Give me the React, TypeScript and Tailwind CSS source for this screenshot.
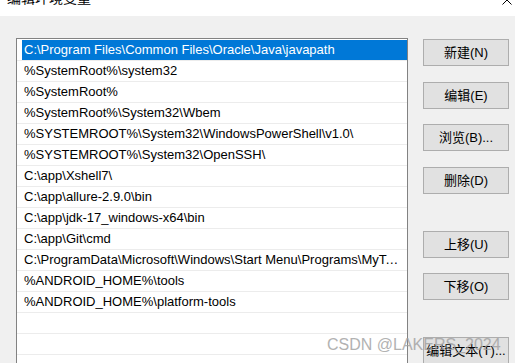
import React from "react";

const PATHS = [
  "C:\\Program Files\\Common Files\\Oracle\\Java\\javapath",
  "%SystemRoot%\\system32",
  "%SystemRoot%",
  "%SystemRoot%\\System32\\Wbem",
  "%SYSTEMROOT%\\System32\\WindowsPowerShell\\v1.0\\",
  "%SYSTEMROOT%\\System32\\OpenSSH\\",
  "C:\\app\\Xshell7\\",
  "C:\\app\\allure-2.9.0\\bin",
  "C:\\app\\jdk-17_windows-x64\\bin",
  "C:\\app\\Git\\cmd",
  "C:\\ProgramData\\Microsoft\\Windows\\Start Menu\\Programs\\MyTools\\bin",
  "%ANDROID_HOME%\\tools",
  "%ANDROID_HOME%\\platform-tools",
  "",
  "",
  "",
];

const BUTTONS = [
  { label: "新建(N)", mt: "mt-0" },
  { label: "编辑(E)", mt: "mt-[16px]" },
  { label: "浏览(B)...", mt: "mt-[15px]" },
  { label: "删除(D)", mt: "mt-[16px]" },
  { label: "上移(U)", mt: "mt-[37px]" },
  { label: "下移(O)", mt: "mt-[15px]" },
  { label: "编辑文本(T)...", mt: "mt-[37px]" },
];

export default function App() {
  return (
    <div
      className="relative w-[515px] h-[363px] overflow-hidden bg-[#f0f0f0] text-black"
      style={{ fontFamily: '"Liberation Sans", "Noto Sans CJK SC", sans-serif' }}
    >
      {/* Title bar, mostly scrolled off */}
      <div className="flex justify-between h-[16px] bg-white overflow-hidden">
        <div className="ml-[7px] -mt-[10px] text-[14px] leading-[16px]">编辑环境变量</div>
        <svg width="10" height="10" viewBox="0 0 10 10" className="mr-[3px] -mt-[5px]" fill="none" stroke="#000" strokeWidth="1">
          <path d="M0.5 0.5 L9.5 9.5 M9.5 0.5 L0.5 9.5" />
        </svg>
      </div>

      <div className="flex items-start pl-[16px] pt-[22px]">
        {/* Path list */}
        <div className="w-[392px] h-[400px] border border-[#828282] bg-white pt-[1px]">
          {PATHS.map((p, i) => (
            <div key={i} className="h-[21px] border-b border-[#ececec]">
              <div
                className={
                  "ml-[5px] h-[20px] pl-[2px] pr-[8px] text-[13px] leading-[20px] whitespace-nowrap overflow-hidden text-ellipsis " +
                  (i === 0 ? "bg-[#0078d7] text-white" : "")
                }
              >
                {p}
              </div>
            </div>
          ))}
        </div>

        {/* Buttons */}
        <div className="flex flex-col ml-[15px] pt-[1px]">
          {BUTTONS.map((b) => (
            <div
              key={b.label}
              className={
                b.mt +
                " w-[86px] h-[27px] flex items-center justify-center border border-[#adadad] bg-[#e1e1e1] text-[13px] whitespace-nowrap"
              }
            >
              {b.label}
            </div>
          ))}
        </div>
      </div>

      {/* watermark */}
      <div className="absolute left-[327px] top-[335px] text-[16px] leading-[20px] text-[#a0a0a0] opacity-80 whitespace-nowrap">
        CSDN @LAKERS_2024
      </div>
    </div>
  );
}
